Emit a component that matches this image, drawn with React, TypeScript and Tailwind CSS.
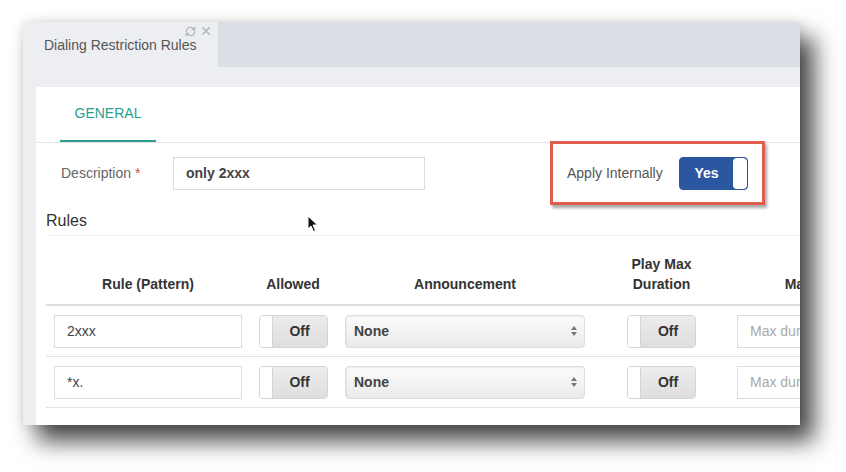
import { RefreshCw, X } from 'lucide-react';

const font = { fontFamily: '"Liberation Sans", Arial, sans-serif' };

function OffToggle() {
  return (
    <div className="flex h-[33px] w-[69px] overflow-hidden rounded-[4px] border border-[#d4d4d4] shadow-[inset_0_1px_2px_rgba(0,0,0,0.08)]">
      <div className="w-[13px] border-r border-[#d4d4d4] bg-white" />
      <div className="flex flex-1 items-center justify-center bg-gradient-to-b from-[#ececec] to-[#dedede] text-[14px] font-bold text-[#333]">
        Off
      </div>
    </div>
  );
}

function SelectBox() {
  return (
    <div className="flex h-[33px] w-[240px] items-center justify-between rounded-[4px] border border-[#dcdcdc] bg-gradient-to-b from-[#fbfbfb] to-[#ebebeb] pl-[8px] pr-[6px] shadow-[inset_1px_1px_2px_rgba(0,0,0,0.06)]">
      <span className="text-[14px] font-bold text-[#444]">None</span>
      <svg width="8" height="12" viewBox="0 0 8 12">
        <path d="M4 1 L7 5 L1 5 Z" fill="#777" />
        <path d="M4 11 L7 7 L1 7 Z" fill="#777" />
      </svg>
    </div>
  );
}

function Row({ pattern }: { pattern: string }) {
  return (
    <div className="flex h-[51px] items-center border-b border-[#e3e3e3]">
      <div className="flex w-[204px] shrink-0 justify-center">
        <div className="flex h-[33px] w-[188px] items-center border border-[#dcdcdc] bg-white pl-[12px] text-[14px] text-[#444]">
          {pattern}
        </div>
      </div>
      <div className="flex w-[86px] shrink-0 justify-center">
        <OffToggle />
      </div>
      <div className="flex w-[258px] shrink-0 justify-center">
        <SelectBox />
      </div>
      <div className="flex w-[135px] shrink-0 justify-center">
        <OffToggle />
      </div>
      <div className="w-[200px] shrink-0 pl-[8px]">
        <div className="flex h-[33px] w-[184px] items-center border border-[#dcdcdc] bg-white pl-[12px] text-[14px] text-[#aaa]">
          Max duration
        </div>
      </div>
    </div>
  );
}

export default function App() {
  return (
    <div className="relative h-[472px] w-[846px] overflow-hidden bg-white pl-[23px] pt-[22px]" style={font}>
      <div className="flex h-[403px] w-[777px] flex-col overflow-hidden bg-[#eceef1] shadow-[14px_16px_22px_rgba(0,0,0,0.72),0_0_10px_rgba(0,0,0,0.12)]">
        {/* Tab bar */}
        <div className="flex h-[45px] shrink-0">
          <div className="relative flex w-[195px] shrink-0 items-center pl-[21px] pt-[2px] text-[14px] text-[#555]">
            Dialing Restriction Rules
            <div className="absolute right-[6px] top-[3px] flex items-center gap-[4px] text-[#b3b6bd]">
              <RefreshCw size={11} strokeWidth={3} />
              <X size={12} strokeWidth={3.5} />
            </div>
          </div>
          <div className="flex-1 bg-[#dcdee6]" />
        </div>

        {/* Panel */}
        <div className="flex flex-1 flex-col pl-[13px] pt-[20px]">
          <div className="flex-1 bg-white">
            <div className="flex h-[56px] border-b border-[#e5e5e5] pl-[24px]">
              <div className="flex w-[96px] items-center justify-center border-b-2 border-[#2a9d8f] text-[14px] text-[#27a08f]">
                GENERAL
              </div>
            </div>

            <div className="flex h-[60px] items-center">
              <div className="w-[137px] shrink-0 pl-[25px] text-[14px] text-[#666]">
                Description <span className="text-[#e0483d]">*</span>
              </div>
              <div className="flex h-[33px] w-[252px] shrink-0 items-center border border-[#dcdcdc] pl-[12px] text-[14px] font-bold text-[#444]">
                only 2xxx
              </div>
              <div className="ml-[125px] flex h-[64px] w-[215px] shrink-0 items-center justify-between border-[3px] border-[#e15d4d] bg-white pl-[14px] pr-[14px] shadow-[2px_3px_3px_rgba(0,0,0,0.35)]">
                <span className="text-[14px] text-[#555]">Apply Internally</span>
                <div className="flex h-[33px] w-[69px] overflow-hidden rounded-[4px] border border-[#2b57a0] bg-[#2b57a0]">
                  <div className="flex flex-1 items-center justify-center text-[14px] font-bold text-white">Yes</div>
                  <div className="w-[14px] rounded-[4px] bg-white" />
                </div>
              </div>
            </div>

            <div className="ml-[10px] border-b border-[#f2f2f2] pb-[2px] pt-[6px] text-[16px] text-[#333]">Rules</div>

            <div className="ml-[10px]">
              <div className="flex h-[70px] items-end border-b-2 border-[#dedede] pb-[10px] text-[14px] font-bold leading-[20px] text-[#333]">
                <div className="w-[204px] shrink-0 text-center">Rule (Pattern)</div>
                <div className="w-[86px] shrink-0 text-center">Allowed</div>
                <div className="w-[258px] shrink-0 text-center">Announcement</div>
                <div className="w-[135px] shrink-0 text-center">
                  Play Max
                  <br />
                  Duration
                </div>
                <div className="w-[200px] shrink-0 text-center">Max Duration</div>
              </div>
              <Row pattern="2xxx" />
              <Row pattern="*x." />
            </div>
          </div>
        </div>
      </div>

      {/* mouse pointer */}
      <svg className="absolute left-[307px] top-[215px]" width="12" height="18" viewBox="0 0 12 18">
        <path d="M1 1 L1 14 L4 11 L6.5 16.5 L8.5 15.5 L6 10 L10.5 10 Z" fill="#111" stroke="#fff" strokeWidth="1" />
      </svg>
    </div>
  );
}
